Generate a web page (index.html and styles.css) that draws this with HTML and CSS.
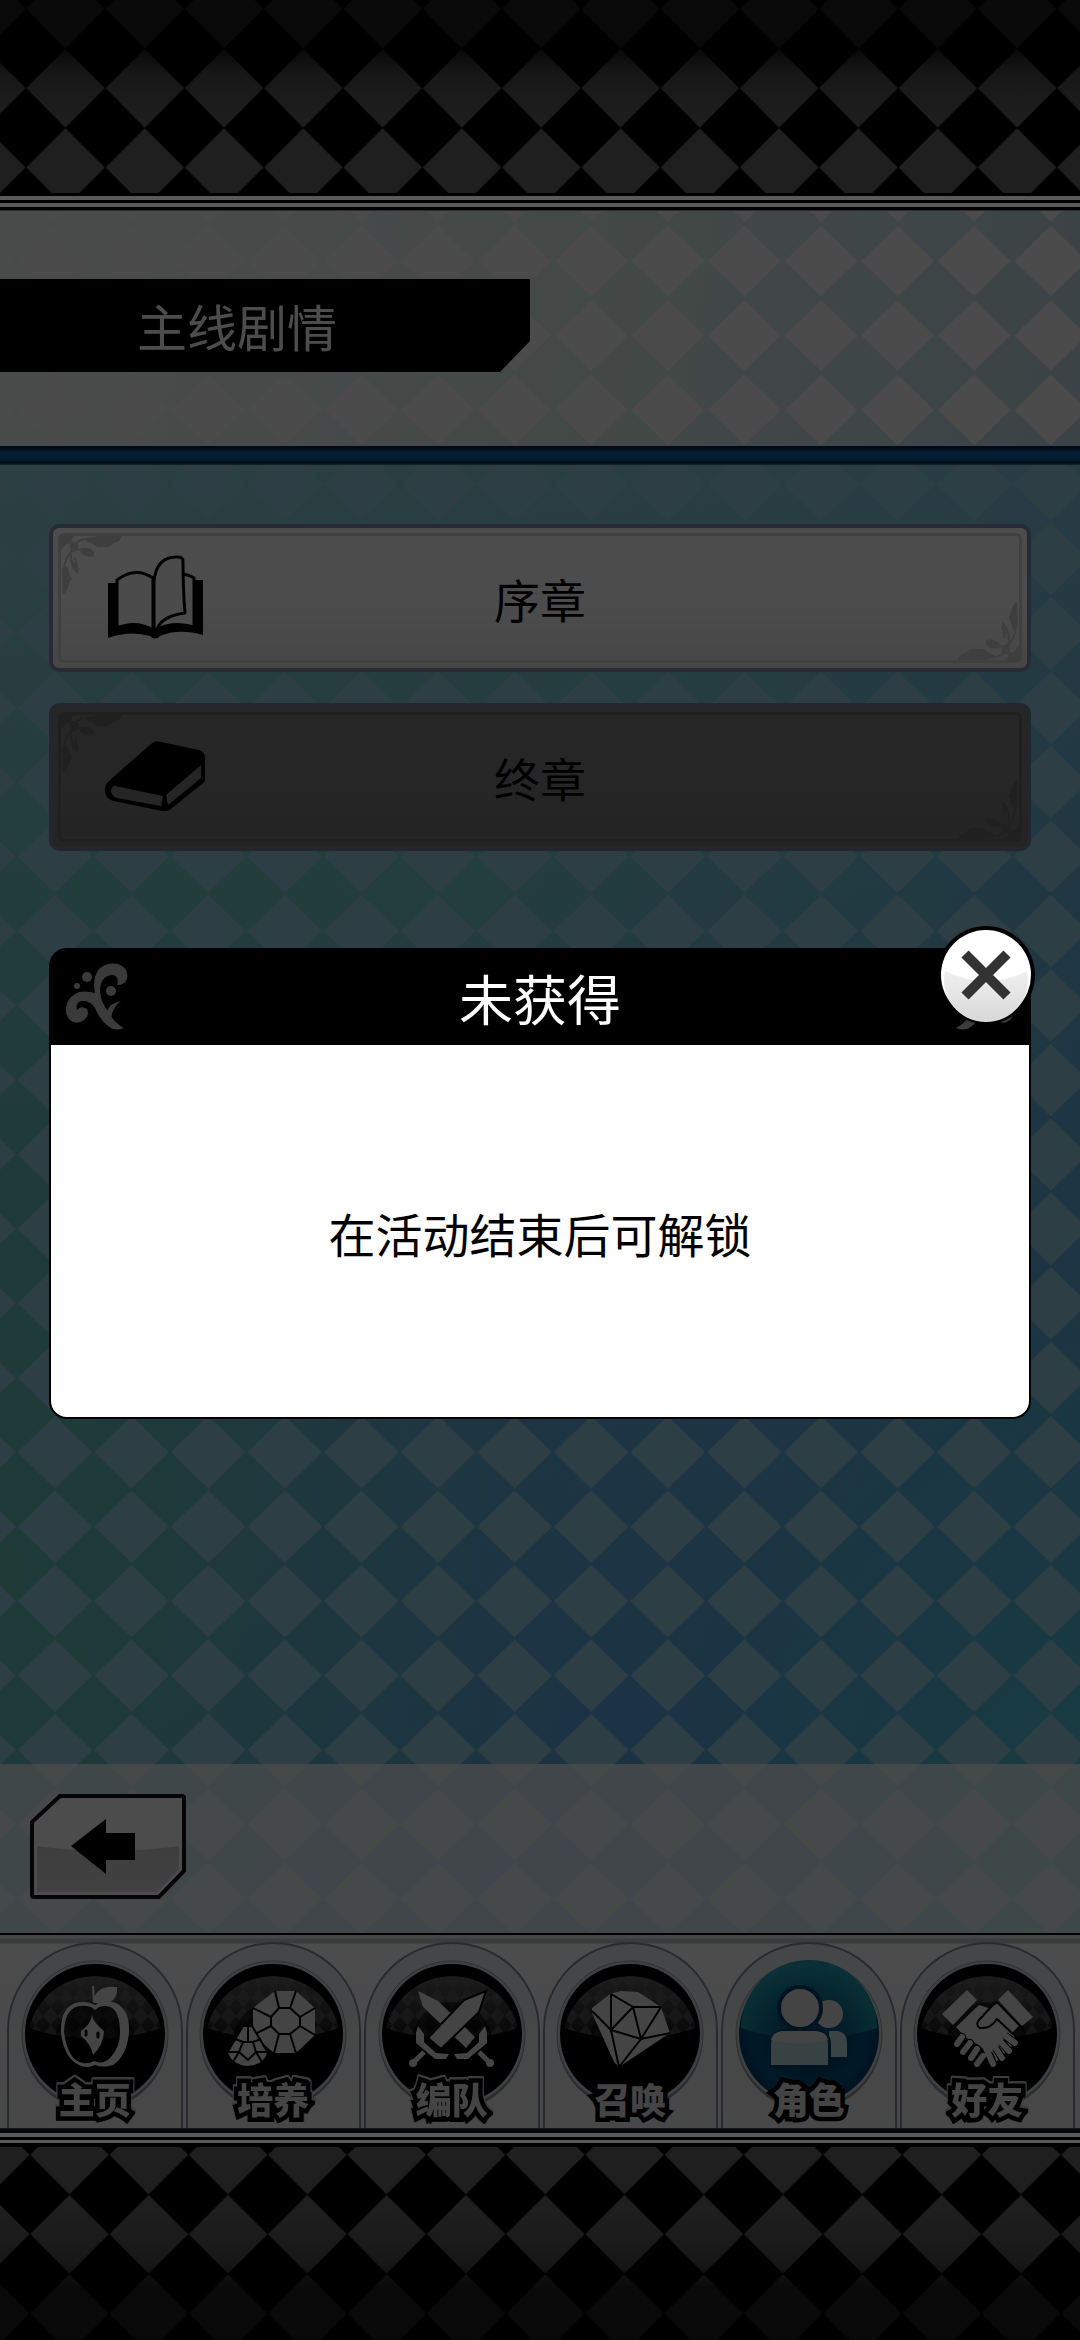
FILE: index.html
```html
<!DOCTYPE html>
<html lang="zh-CN">
<head>
    <meta charset="UTF-8">
    <meta name="viewport" content="width=device-width, initial-scale=1.0">
    <title>主线剧情</title>
    <link rel="stylesheet" href="styles.css">
</head>
<body>
    <!-- shared patterns and symbols -->
    <svg class="defs" aria-hidden="true">
        <defs>
            <pattern id="band-top" width="79.3" height="79.3" x="25.8" y="48.5" patternUnits="userSpaceOnUse">
                <path d="M39.6 0.5L79 39.6L39.6 79L0.5 39.6z" fill="#1f1f1f"/>
            </pattern>
            <pattern id="band-bottom" width="79.3" height="79.3" x="29.8" y="47.5" patternUnits="userSpaceOnUse">
                <path d="M39.6 0.5L79 39.6L39.6 79L0.5 39.6z" fill="#1f1f1f"/>
            </pattern>
            <pattern id="diamonds" width="76.6" height="74.45" x="16.7" y="12.8" patternUnits="userSpaceOnUse">
                <path d="M38.3 1L75.6 37.2L38.3 73.4L1 37.2z" fill="#9ad0e6"/>
            </pattern>
            <pattern id="diamonds-light" width="76.6" height="74.45" x="16.7" y="12.8" patternUnits="userSpaceOnUse">
                <path d="M38.3 2L74.6 37.2L38.3 72.4L2 37.2z" fill="#fffafa"/>
            </pattern>
            <pattern id="disc-check" width="15" height="18" x="-7" y="-9" patternUnits="userSpaceOnUse">
                <path d="M7.5 0L15 9L7.5 18L0 9z" fill="#666" opacity=".55"/>
            </pattern>
            <linearGradient id="gloss" x1="0" y1="0" x2="0" y2="1">
                <stop offset="0" stop-color="#5c5c5c"/>
                <stop offset="1" stop-color="#181818"/>
            </linearGradient>
            <radialGradient id="gloss-blue" gradientUnits="userSpaceOnUse" cx="0" cy="10" r="80">
                <stop offset="0.2" stop-color="#064a80"/>
                <stop offset="0.7" stop-color="#0d8298"/>
                <stop offset="1" stop-color="#22a4ba"/>
            </radialGradient>
            <radialGradient id="base-blue" gradientUnits="userSpaceOnUse" cx="0" cy="0" r="70">
                <stop offset="0.3" stop-color="#033862"/>
                <stop offset="0.8" stop-color="#045684"/>
                <stop offset="1" stop-color="#03406c"/>
            </radialGradient>
            <symbol id="disc" viewBox="-76 -76 152 152">
                <ellipse cx="0" cy="3" rx="73" ry="73" fill="#8d9294"/>
                <circle r="73" fill="#d3d8da"/>
                <circle r="73" fill="none" stroke="#9aa0a3"/>
                <circle r="70" fill="#000"/>
                <path d="M-66 -6A68 68 0 0 1 66 -6Q0 16 -66 -6z" fill="url(#gloss)"/>
                <path d="M-66 -6A68 68 0 0 1 66 -6Q0 16 -66 -6z" fill="url(#disc-check)"/>
                <circle cy="8" r="40" fill="#000" opacity=".55"/>
            </symbol>
            <symbol id="disc-active" viewBox="-76 -76 152 152">
                <ellipse cx="0" cy="3" rx="73" ry="73" fill="#8d9294"/>
                <circle r="73" fill="#d3d8da"/>
                <circle r="73" fill="none" stroke="#9aa0a3"/>
                <circle r="70" fill="url(#base-blue)"/>
                <path d="M-68 -6A68 68 0 0 1 68 -6Q0 16 -68 -6z" fill="url(#gloss-blue)"/>
                <path d="M-68 -6A68 68 0 0 1 68 -6Q0 16 -68 -6z" fill="url(#disc-check)" opacity=".15"/>
            </symbol>
            <linearGradient id="close-gloss" x1="0" y1="0" x2="0" y2="1">
                <stop offset="0" stop-color="#f0f0f0"/>
                <stop offset="1" stop-color="#d8d8d8"/>
            </linearGradient>
            <linearGradient id="back-gloss" x1="0" y1="0" x2="0" y2="1">
                <stop offset="0" stop-color="#d0d0d0"/>
                <stop offset="1" stop-color="#dcdcdc"/>
            </linearGradient>
            <symbol id="flourish" viewBox="0 0 66 64">
                <path d="M1 1H16Q10 4 12 10Q6 8 3 14L1 16z"/>
                <path d="M24 5Q34 1 62 2Q60 8 54 9Q50 14 42 13Q36 14 32 9Q28 9 24 5z"/>
                <path d="M2 36Q4 30 8 34Q9 42 12 44Q9 48 8 54Q5 60 3 60z"/>
                <path d="M24 5Q14 7 11 18Q5 24 4 36M11 18Q10 30 17 38M11 18Q20 12 34 19M15 24Q16 30 18 36" fill="none" stroke-width="2"/>
                <path d="M22 14Q34 12 34 22Q26 24 20 18zM10 26Q18 28 18 40Q12 36 10 26z"/>
                <circle cx="14" cy="12" r="4"/>
            </symbol>
            <symbol id="scroll" viewBox="0 0 72 76">
                <path d="M56 25Q59 15 50 15Q39 17 39 31Q40 43 47 51Q52 62 63 68Q54 72 47 66Q39 60 34 48Q29 40 21 41Q14 42 16 50Q20 45 26 49Q29 55 23 60Q15 66 8 59Q2 51 7 41Q14 29 29 32L34 33Q31 18 38 9Q46 2 57 4Q68 8 66 19Q64 25 56 25z"/>
                <path d="M60 41Q49 43 46 51L50 60Q51 47 60 41z"/>
                <circle cx="26" cy="17" r="5"/>
                <circle cx="16" cy="26" r="3"/>
                <circle cx="50" cy="31" r="5"/>
            </symbol>
        </defs>
    </svg>

    <div class="band band-top">
        <svg width="100%" height="100%" aria-hidden="true"><rect width="100%" height="100%" fill="url(#band-top)"/></svg>
    </div>
    <div class="rules"></div>

    <main class="stage">
        <svg class="backdrop" aria-hidden="true"><rect width="100%" height="100%" fill="url(#diamonds)"/></svg>

        <header class="header">
            <svg class="backdrop" aria-hidden="true"><rect width="100%" height="100%" fill="url(#diamonds-light)"/></svg>
            <h1 class="title">主线剧情</h1>
        </header>
        <div class="divider"></div>

        <section class="chapters">
            <button class="chapter" type="button">
                <svg class="flourish" aria-hidden="true"><use href="#flourish"/></svg>
                <svg class="book" viewBox="0 0 104 96" aria-hidden="true">
                    <path d="M4 33H12V79Q30 71 49 80H53Q70 72 90 77V30H99V85Q74 78 56 86Q51 91 46 86Q26 80 4 88z"/>
                    <path d="M13 78V30Q31 16 49 28V80Q32 70 13 78zM53 79Q70 71 90 77V28Q84 24 76 24L49 40V80z" fill="#fbfbfb" stroke="#000" stroke-width="3"/>
                    <path d="M50 80V32Q52 6 74 7Q79 7 79 11Q79 40 81 63Q58 66 53 79z" fill="#fbfbfb" stroke="#000" stroke-width="3" stroke-linejoin="round"/>
                </svg>
                <span class="chapter-name">序章</span>
                <svg class="flourish flourish-end" aria-hidden="true"><use href="#flourish"/></svg>
            </button>
            <button class="chapter chapter-locked" type="button" disabled>
                <svg class="flourish" aria-hidden="true"><use href="#flourish"/></svg>
                <svg class="book" viewBox="0 0 104 96" aria-hidden="true">
                    <path d="M47 15Q51 11 57 13L95 21Q101 23 101 29V50Q101 53 98 55L68 79Q64 83 58 82L10 72Q1 70 1 62Q0 56 6 51z"/>
                    <path d="M11 57L59 67L57 77L13 69Q7 67 7 61Q8 57 11 57zM62 66L97 36V49L64 76z" fill="#7e7e7e"/>
                </svg>
                <span class="chapter-name">终章</span>
                <svg class="flourish flourish-end" aria-hidden="true"><use href="#flourish"/></svg>
            </button>
        </section>

        <div class="toolbar">
            <button class="back" type="button" aria-label="返回">
                <svg viewBox="0 0 156 105" aria-hidden="true">
                    <path d="M30 2H152Q154 2 154 4V77L129 103H4Q2 103 2 101V28z" fill="#fdfdfd" stroke="#111" stroke-width="4"/>
                    <path d="M7 52Q78 62 149 52V75L127 98H7z" fill="url(#back-gloss)"/>
                    <path d="M41 52L76 25V39H105V66H76V80z" fill="#000"/>
                </svg>
            </button>
        </div>

        <nav class="nav">
            <a class="tab" href="#home">
                <svg class="tab-icon" viewBox="-76 -76 152 152" aria-hidden="true">
                    <use href="#disc" x="-76" y="-76" width="152" height="152"/>
                    <path d="M-2 -48L-1 -31M-1 -32Q2 -48 21 -46Q22 -32 6 -31z" stroke="#e4e4e4" stroke-width="2"/>
                    <path fill-rule="evenodd" d="M0 -29Q10 -35 21 -31Q35 -24 34 -2Q32 22 18 31Q8 34 0 31Q-8 35 -16 31Q-31 24 -34 -1Q-35 -25 -20 -31Q-8 -34 0 -29zM-4 -27Q-30 -34 -31 -2Q-27 27 -12 29Q-6 30 -1 27Q8 31 15 24Q26 12 25 -4Q24 -33 4 -27L0 -24z"/>
                    <path d="M-3 -19Q-2 -12 9 -3Q9 10 -2 21Q-4 10 -14 2V-3Q-4 -10 -3 -19z"/>
                    <path d="M-9 -3V1M3 -1V3" stroke="#000" stroke-width="3" stroke-linecap="round"/>
                </svg>
                <span class="tab-label tab-label-outlined">主页</span>
            </a>
            <a class="tab" href="#train">
                <svg class="tab-icon" viewBox="-76 -76 152 152" aria-hidden="true">
                    <use href="#disc" x="-76" y="-76" width="152" height="152"/>
                    <path d="M2 -43H23L42 -26V1L23 19H1L-20 1V-26z"/>
                    <path d="M6 -26H17L27 -17V-8L17 0H6L-2 -8V-17zM2 -43L6 -26M23 -43L17 -26M42 -26L27 -17M42 1L27 -8M23 19L17 0M1 19L6 0M-20 1L-2 -8M-20 -26L-2 -17" fill="none" stroke="#000" stroke-width="2"/>
                    <path d="M-30 -8H-21L-5 19Q-8 32 -26 33Q-42 31 -46 19z" stroke="#000" stroke-width="2"/>
                    <path d="M-30 8H-20L-17 18L-25 26L-34 18zM-25 -8V8M-30 8L-38 5M-20 8L-12 5M-17 18H-5M-34 18H-46M-34 18L-40 28M-17 18L-11 28" fill="none" stroke="#000" stroke-width="2"/>
                </svg>
                <span class="tab-label tab-label-outlined">培养</span>
            </a>
            <a class="tab" href="#team">
                <svg class="tab-icon" viewBox="-76 -76 152 152" aria-hidden="true">
                    <use href="#disc" x="-76" y="-76" width="152" height="152"/>
                    <path d="M-34 -43L-14 -33L23 3L14 14L-10 -9L-29 -27z"/>
                    <path d="M34 -43L27 -22L-11 15L-24 4L12 -34z" stroke="#000" stroke-width="2"/>
                    <path d="M-34 -8L-28 0V8L-16 19L-3 20L-6 25H-17L-36 9V-1zM33 -8L27 0V8L15 19L2 20L5 25H16L35 9V-1z"/>
                    <path d="M-28 18L-38 28M27 18L37 28" stroke="#e4e4e4" stroke-width="5"/>
                    <circle cx="-39" cy="29" r="4"/>
                    <circle cx="38" cy="29" r="4"/>
                </svg>
                <span class="tab-label tab-label-outlined">编队</span>
            </a>
            <a class="tab" href="#summon">
                <svg class="tab-icon" viewBox="-76 -76 152 152" aria-hidden="true">
                    <use href="#disc" x="-76" y="-76" width="152" height="152"/>
                    <path d="M-20 -40L-9 -43L8 -42L31 -27L40 -1L-11 33L-16 28L-38 -21V-26z"/>
                    <path d="M-19 -40V-4L3 -27L-19 -40M31 -27H3L11 5L31 -27M-38 -23L-19 -4L11 5L40 -1M-19 -4L-11 33L11 5" fill="none" stroke="#000" stroke-width="2"/>
                </svg>
                <span class="tab-label">召唤</span>
            </a>
            <a class="tab" href="#roles" aria-current="page">
                <svg class="tab-icon" viewBox="-76 -76 152 152" aria-hidden="true">
                    <use href="#disc-active" x="-76" y="-76" width="152" height="152"/>
                    <circle cx="20" cy="-20" r="14"/>
                    <path d="M20 -3H28Q38 -2 38 9V23H20z" fill="#c4e3e3"/>
                    <circle cx="-9" cy="-26" r="21" stroke="#04416e" stroke-width="4"/>
                    <path d="M-39 34V10Q-38 -5 -23 -5H6Q22 -4 22 10V34z" fill="#04416e"/>
                    <path d="M-38 31V10Q-37 -3 -24 -3H6Q19 -2 19 10V31z" fill="#c0dede"/>
                    <path d="M-38 6Q-36 -3 -24 -3H6Q18 -2 19 6Q-10 13 -38 6z"/>
                </svg>
                <span class="tab-label">角色</span>
            </a>
            <a class="tab" href="#friends">
                <svg class="tab-icon" viewBox="-76 -76 152 152" aria-hidden="true">
                    <use href="#disc" x="-76" y="-76" width="152" height="152"/>
                    <path d="M-20 -44L-10 -34L-34 -9L-45 -20zM21 -44L46 -17L35 -8L11 -34z"/>
                    <path d="M-8 -29L-31 -7L-22 3Q-4 12 0 20L6 31L29 8Q26 -2 22 -8L8 -24z"/>
                    <path d="M10 -32L33 -8L26 0L10 -15Q4 -5 -7 -6Q-12 -9 -8 -14L4 -27z" stroke="#000" stroke-width="2" stroke-linejoin="round"/>
                    <g fill="none" stroke-linecap="round">
                        <path d="M-25 3L-30 10M-17 9L-24 18M-10 15L-16 24M-4 22L-10 30M3 22L6 30M10 16L15 24M16 10L22 17M20 3L28 9" stroke="#000" stroke-width="8"/>
                        <path d="M-25 3L-30 10M-17 9L-24 18M-10 15L-16 24M-4 22L-10 30M-2 12L6 30M6 10L15 24M12 6L22 17M16 0L28 9" stroke="#e4e4e4" stroke-width="6"/>
                    </g>
                </svg>
                <span class="tab-label tab-label-outlined">好友</span>
            </a>
        </nav>

        <div class="overlay">
            <div class="dialog" role="dialog" aria-labelledby="dialog-title">
                <div class="dialog-header">
                    <svg class="scroll" aria-hidden="true"><use href="#scroll"/></svg>
                    <h2 class="dialog-title" id="dialog-title">未获得</h2>
                    <svg class="scroll scroll-end" aria-hidden="true"><use href="#scroll"/></svg>
                </div>
                <p class="dialog-text">在活动结束后可解锁</p>
                <button class="close" type="button" aria-label="关闭">
                    <svg viewBox="-49 -49 98 98" aria-hidden="true">
                        <circle r="49" fill="#000"/>
                        <circle r="45" fill="#fff"/>
                        <path d="M-41 -4A42 42 0 1 0 41 -4Q0 16 -41 -4z" fill="url(#close-gloss)"/>
                        <path d="M-21 -21L21 21M21 -21L-21 21" stroke="#333" stroke-width="10"/>
                    </svg>
                </button>
            </div>
        </div>
    </main>

    <div class="rules rules-bottom"></div>
    <div class="band band-bottom">
        <svg width="100%" height="100%" aria-hidden="true"><rect width="100%" height="100%" fill="url(#band-bottom)"/></svg>
    </div>
</body>
</html>
```

FILE: styles.css
```css
* {
    box-sizing: border-box;
}
body {
    margin: 0;
    min-height: 100vh;
    display: flex;
    flex-direction: column;
    background-color: #000;
    font-family: "Noto Sans CJK SC", "Noto Sans", sans-serif;
}
button {
    font-family: inherit;
    padding: 0;
    border: none;
    background: none;
    cursor: pointer;
}
svg {
    display: block;
}
.defs {
    position: absolute;
    width: 0;
    height: 0;
}

/* checkered bands above and below the game area */
.band {
    height: 193px;
    position: relative;
    flex-shrink: 0;
}
.band::after {
    content: "";
    position: absolute;
    inset: 0;
    background: linear-gradient(rgba(0, 0, 0, 0.7) 50px, rgba(0, 0, 0, 0.25) 75px, rgba(0, 0, 0, 0) 130px);
}
.band-bottom::after {
    background: linear-gradient(rgba(0, 0, 0, 0) 60px, rgba(0, 0, 0, 0.25) 115px, rgba(0, 0, 0, 0.7) 142px);
}
.rules {
    height: 18px;
    flex-shrink: 0;
    background: linear-gradient(#000 3px, #5a5a5a 3px 7px, #000 7px 10px, #5a5a5a 10px 14px, #000 14px 17px, #2c2e2e 17px);
}
.rules-bottom {
    height: 19px;
    background: linear-gradient(#11181b 1px, #04080a 1px 5px, #5a5a5a 5px 9px, #000 9px 12px, #5a5a5a 12px 15px, #000 15px);
}

.stage {
    position: relative;
    flex: 1;
    display: flex;
    flex-direction: column;
    background:
        radial-gradient(ellipse 40% 30% at 100% 85%, #50ccd8, rgba(80, 204, 216, 0)),
        radial-gradient(ellipse 55% 50% at 0% 70%, #66c4b8, rgba(90, 191, 192, 0)),
        radial-gradient(ellipse 80% 30% at 30% 32%, rgba(120, 208, 205, 0.9), rgba(115, 210, 210, 0)),
        linear-gradient(160deg, #9ed4e8 15%, #6bb8e0 45%, #5aa8e6 80%);
}
.backdrop {
    position: absolute;
    top: 0;
    left: 0;
    width: 100%;
    height: 100%;
}

.header {
    position: relative;
    height: 235px;
    padding-top: 68px;
    background: linear-gradient(100deg, #f6faf9 10%, #e4f4ef 50%, #d8eee9 70%, #c6e0ea);
}
.title {
    position: relative;
    margin: 0;
    width: 530px;
    height: 93px;
    padding-right: 56px;
    background-color: #000;
    clip-path: polygon(0 0, 100% 0, 100% 62px, 500px 100%, 0 100%);
    color: #fff;
    font-size: 50px;
    font-weight: 400;
    line-height: 92px;
    text-align: center;
}
.divider {
    position: relative;
    height: 19px;
    background: linear-gradient(#00245a 3px, #0a66a8 6px, #0a66a8 13px, #00245a 17px, #4a6878 18px);
}

.chapters {
    position: relative;
    flex: 1;
    display: flex;
    flex-direction: column;
    gap: 31px;
    padding: 59px 49px;
}
.chapter {
    position: relative;
    display: grid;
    grid-template-columns: 104px 1fr 104px;
    align-items: center;
    height: 148px;
    padding: 0 51px;
    border: 4px solid #8090b4;
    border-radius: 10px;
    background: linear-gradient(#fff 50%, #ececec);
    color: #000;
    fill: #cfcfcf;
    stroke: #cfcfcf;
}
.chapter::before {
    content: "";
    position: absolute;
    inset: 5px;
    border: 3px solid #d6d6d6;
    border-radius: 6px;
}
.chapter-locked {
    border-color: #78809a;
    background: linear-gradient(#808080 50%, #787878);
    fill: #6c6c6c;
    stroke: #6c6c6c;
}
.chapter-locked::before {
    border-color: #6c6c6c;
}
.chapter-name {
    font-size: 46px;
    line-height: 56px;
}
.book {
    width: 104px;
    height: 96px;
    fill: #000;
    stroke: none;
}
.flourish {
    position: absolute;
    top: 6px;
    left: 7px;
    width: 66px;
    height: 64px;
    stroke-width: 0;
}
.flourish-end {
    top: auto;
    left: auto;
    right: 7px;
    bottom: 6px;
    transform: rotate(180deg);
}

.toolbar {
    position: relative;
    height: 169px;
    padding: 30px;
    background-color: rgba(255, 255, 255, 0.75);
}
.back svg {
    width: 156px;
    height: 105px;
}

.nav {
    position: relative;
    display: grid;
    grid-template-columns: repeat(6, 1fr);
    gap: 3px;
    height: 195px;
    padding: 9px 5px 0 7px;
    background: linear-gradient(#000 2px, #e6eeee 2px 5px, #c2caca 6px 10px, #fff 11px, #f0f0f0);
}
.tab {
    display: grid;
    justify-items: center;
    border: 2px solid #8a8e9a;
    border-bottom: none;
    border-radius: 88px 88px 0 0;
    background: linear-gradient(#e4eaee, #f0f0f0);
    color: #e4e4e4;
    text-decoration: none;
}
.tab-icon {
    grid-area: 1 / 1;
    width: 152px;
    height: 152px;
    margin-top: 14px;
    fill: #e4e4e4;
}
.tab-label {
    grid-area: 1 / 1;
    align-self: end;
    margin-bottom: 8px;
    font-size: 36px;
    font-weight: 900;
    line-height: 44px;
    -webkit-text-stroke: 9px #000;
    paint-order: stroke fill;
}
.tab-label-outlined {
    filter: drop-shadow(0 -2px 0 #c8c8c8) drop-shadow(1px 0 0 #c8c8c8) drop-shadow(-1px 0 0 #c8c8c8);
}

.overlay {
    position: absolute;
    inset: 0;
    display: flex;
    align-items: center;
    padding: 28px 49px 0;
    background-color: rgba(0, 0, 0, 0.7);
}
.dialog {
    position: relative;
    flex: 1;
    background-color: #fff;
    border: 2px solid #000;
    border-radius: 18px;
}
.dialog-header {
    display: flex;
    align-items: center;
    justify-content: space-between;
    height: 95px;
    padding: 0 10px;
    background-color: #000;
    border-radius: 14px 14px 0 0;
}
.dialog-title {
    margin: 0;
    color: #fff;
    font-size: 54px;
    font-weight: 400;
    line-height: 64px;
}
.scroll {
    width: 72px;
    height: 76px;
    fill: #3a3a3a;
}
.scroll-end {
    transform: scaleX(-1);
}
.dialog-text {
    display: flex;
    align-items: center;
    justify-content: center;
    min-height: 372px;
    margin: 0;
    padding: 18px 24px 14px;
    color: #000;
    font-size: 47px;
    line-height: 60px;
}
.close {
    position: absolute;
    top: -24px;
    right: -6px;
}
.close svg {
    width: 98px;
    height: 98px;
}
```
